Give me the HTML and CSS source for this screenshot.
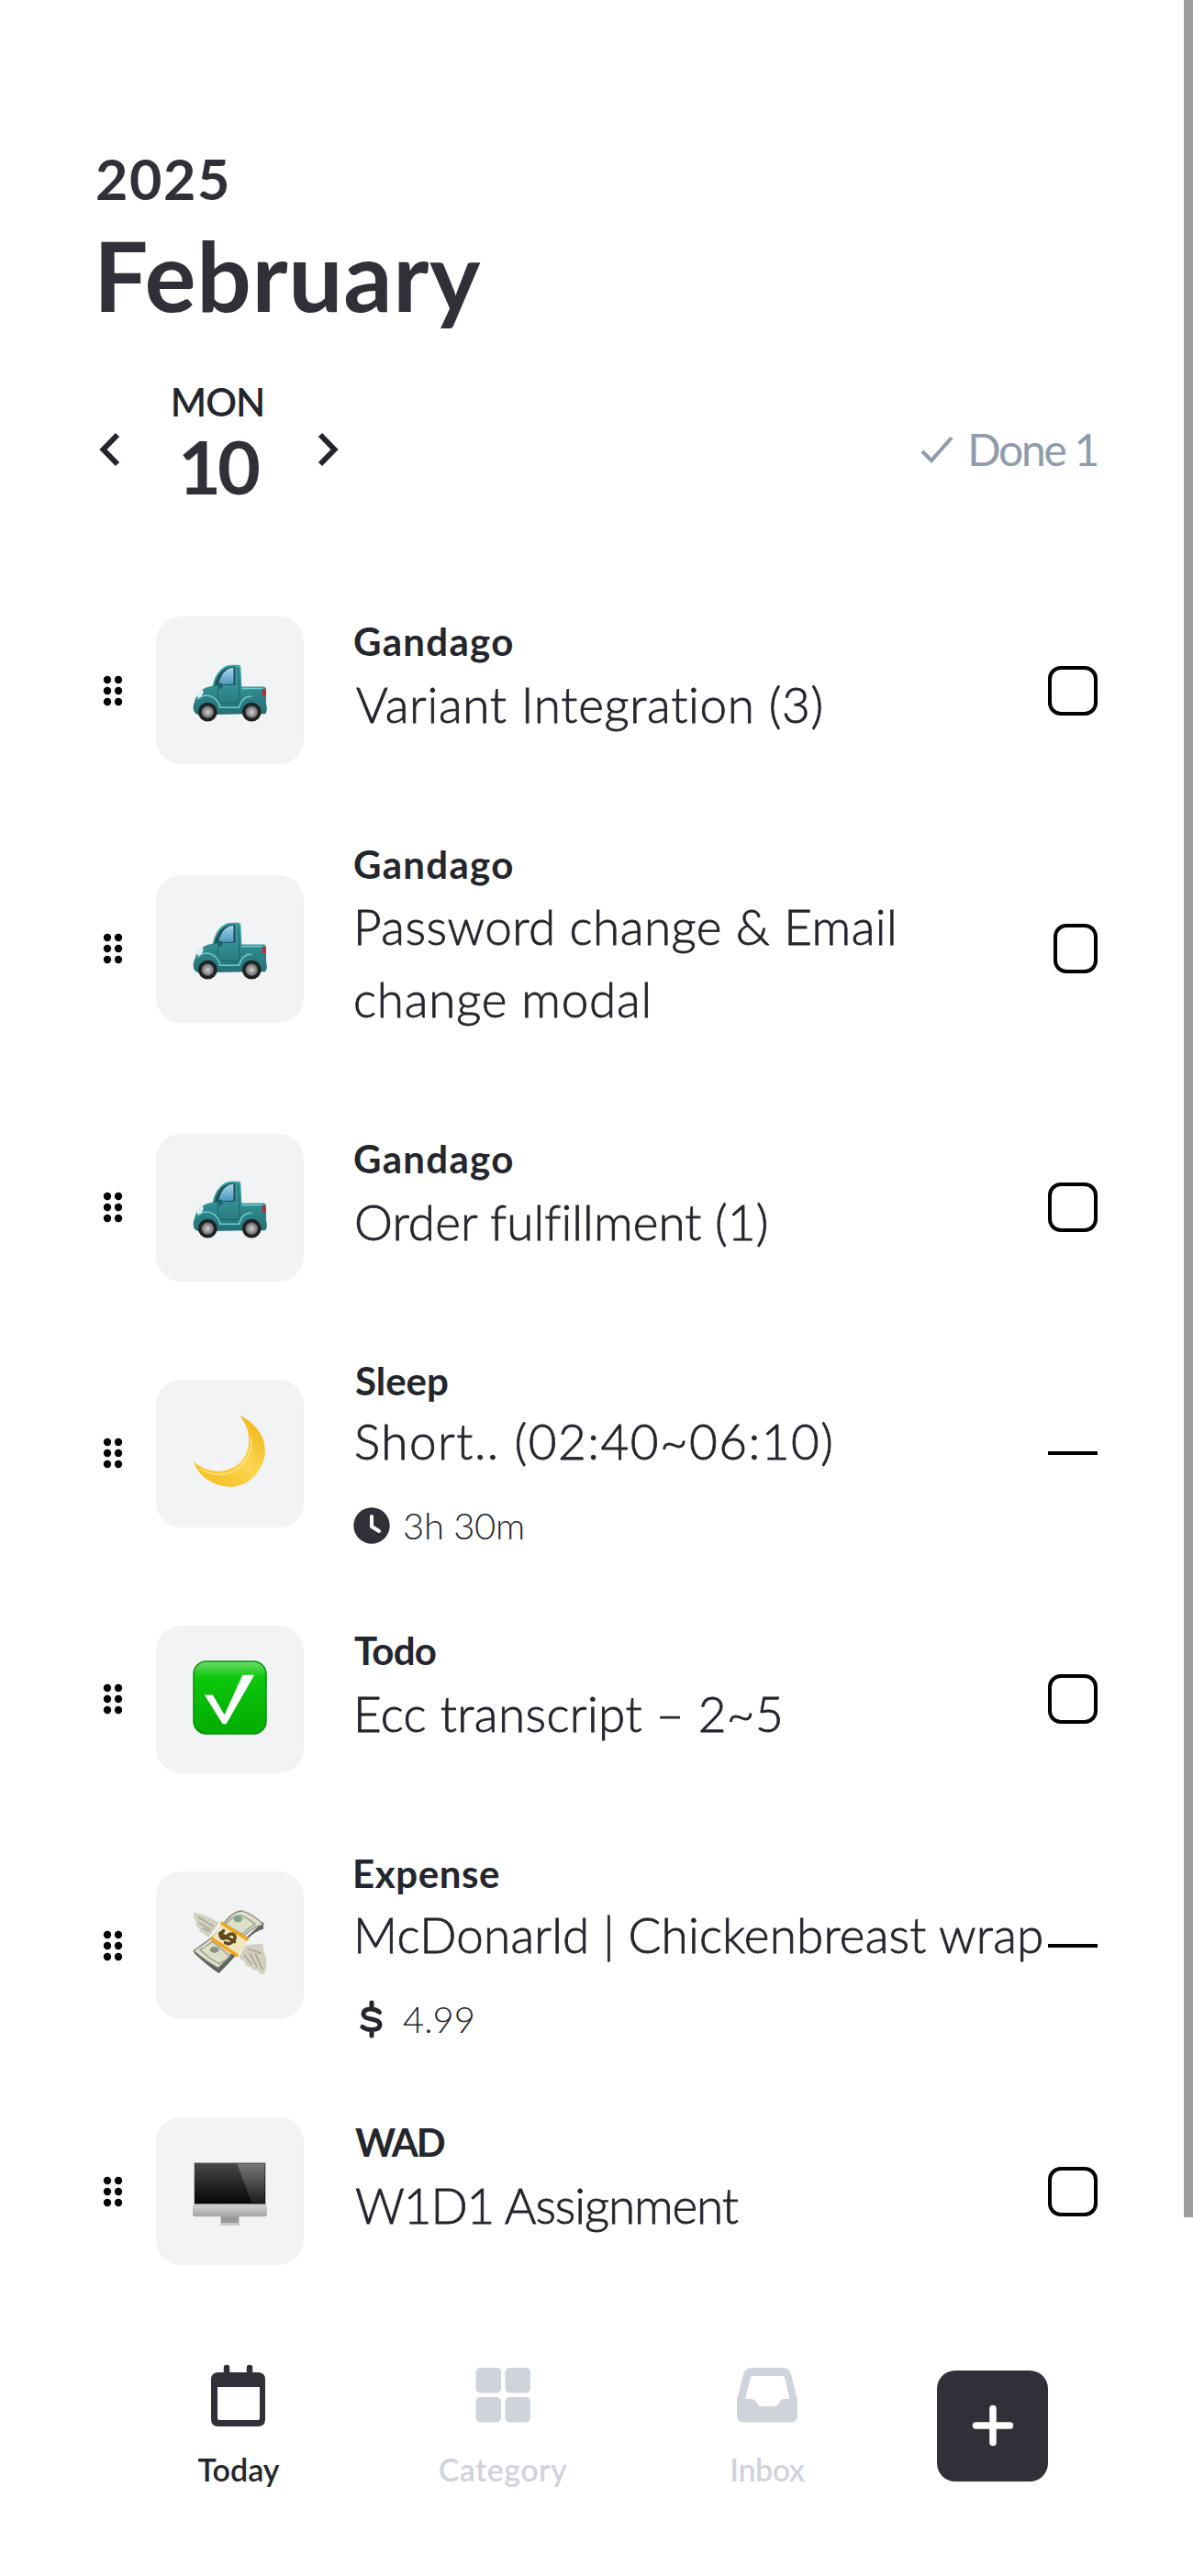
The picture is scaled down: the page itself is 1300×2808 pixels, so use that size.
FILE: index.html
```html
<!DOCTYPE html>
<html lang="en">
<head>
<meta charset="utf-8">
<title>Today</title>
<link rel="stylesheet" href="styles.css">
</head>
<body>
<svg class="defs" width="0" height="0" aria-hidden="true">
  <defs>
    <linearGradient id="teal" x1="0" y1="0" x2="0" y2="1"><stop offset="0" stop-color="#3fa5a8"/><stop offset="1" stop-color="#246f75"/></linearGradient>
    <linearGradient id="glass" x1="0" y1="0" x2="0" y2="1"><stop offset="0" stop-color="#a5d5ea"/><stop offset="1" stop-color="#4a95bd"/></linearGradient>
    <radialGradient id="hub"><stop offset="0" stop-color="#d4d4d4"/><stop offset="1" stop-color="#6a6a6a"/></radialGradient>
    <linearGradient id="gold" x1="1" y1="0" x2="0.2" y2="1"><stop offset="0" stop-color="#f0b00f"/><stop offset=".55" stop-color="#fbd552"/><stop offset="1" stop-color="#f5bd1c"/></linearGradient>
    <linearGradient id="green" x1="0" y1="0" x2="0" y2="1"><stop offset="0" stop-color="#6fdc6f"/><stop offset=".22" stop-color="#0cc70c"/><stop offset="1" stop-color="#00ac00"/></linearGradient>
    <linearGradient id="screen" x1="0" y1="0" x2="0" y2="1"><stop offset="0" stop-color="#484848"/><stop offset="1" stop-color="#050505"/></linearGradient>
    <linearGradient id="shine" x1="0" y1="0" x2="0" y2="1"><stop offset="0" stop-color="#777"/><stop offset="1" stop-color="#1c1c1c"/></linearGradient>
    <linearGradient id="metal" x1="0" y1="0" x2="0" y2="1"><stop offset="0" stop-color="#d0d0d3"/><stop offset="1" stop-color="#a5a5a9"/></linearGradient>
    <symbol id="grip" viewBox="0 0 22 34"><circle cx="5" cy="5" r="4.2"/><circle cx="17" cy="5" r="4.2"/><circle cx="5" cy="17" r="4.2"/><circle cx="17" cy="17" r="4.2"/><circle cx="5" cy="29" r="4.2"/><circle cx="17" cy="29" r="4.2"/></symbol>
    <symbol id="truck" viewBox="0 -6 82 82">
      <path fill="url(#teal)" d="M1 58q-1-5 1-9 2-9 7-13 6-4 13-5 3-15 13-21 3-2 8-2h7q3 0 3 3l1 21h24q3 0 3 4v15q2 8-1 11h-7L9 63q-7 0-8-5Z"/>
      <path fill="#1d5158" d="M24 31Q27 17 36 12q3-2 7-2h4v20Z"/>
      <path fill="url(#glass)" d="M28 30Q31 18 38 13q3-2 7-2v18Z"/>
      <path stroke="#1d6b70" stroke-width="1.2" fill="none" d="M50 11l2 39M28 50h24M29 31q-3 8 0 18"/>
      <path stroke="#6fcdd0" stroke-width="1.6" fill="none" d="M54 34h23M5 46q8-7 16-3t9 12h21q4-13 14-12"/>
      <path fill="#1d6168" d="M28 28q5-1 5 3t-5 3Z"/>
      <ellipse cx="8" cy="39.500" rx="3" ry="5" transform="rotate(30 8 39.500)" fill="#dfeef0"/>
      <rect x="77" y="35" width="3.500" height="7" fill="#c9262e"/>
      <circle cx="16.500" cy="60" r="10.500" fill="#202224"/><circle cx="16.500" cy="60" r="6.700" fill="url(#hub)"/>
      <circle cx="65" cy="60" r="10.500" fill="#202224"/><circle cx="65" cy="60" r="6.700" fill="url(#hub)"/>
    </symbol>
    <symbol id="moon" viewBox="0 0 82 82"><path fill="url(#gold)" d="M52 1C76 12 86 36 76 56 66 79 41 86 20 74 10 69 4 61 1 52 15 64 32 66 47 57 65 45 67 20 52 1Z"/><path fill="none" stroke="#fff0a0" stroke-width="1.500" opacity=".7" d="M8 60q22 12 41 0Q66 48 65 25"/></symbol>
    <symbol id="check" viewBox="0 0 82 82"><rect x="1" y="1" width="80" height="80" rx="14" fill="url(#green)" stroke="#078f0c" stroke-width="1.500"/><path fill="#fff" d="M13 38h9l13 22 20-44h13L37 70h-4Z"/></symbol>
    <symbol id="money" viewBox="0 0 82 82">
      <path fill="#d3cfbf" d="M1 6q12 1 22 8l6 3-11 16q-4-1-5-4-6-1-6-6-5-3-3-7-4-5-3-10Z"/>
      <path fill="#d3cfbf" d="M58 42l20-2q-1 8 2 13 2 6 1 13-1 8-4 8-4-1-6-5-4 2-7-3-5 0-7-6l-6-4Z"/>
      <path stroke="#a19d8e" stroke-width="1.300" fill="none" d="M6 11l17 10M7 17l13 8M11 23l8 4M61 46l15 5M57 53l8 10M63 51l8 15M69 51l8 18"/>
      <path fill="#5f645c" d="M2 51q15 14 27 22 8-8 17-18 14-26 32-31v-8L52 40 29 65 1 48Z"/>
      <path fill="#dedfc9" stroke="#777b70" stroke-width="1.200" d="M1 48 22 33 35 17Q44 5 54 4q12 3 24 15-17 4-27 20-10 17-23 28Q15 60 1 48Z"/>
      <path fill="none" stroke="#969b8b" stroke-width="1.300" d="M8 47l14-9 19 16q-6 7-13 8-10-6-20-15ZM36 19q8-10 17-10 8 3 16 10-8 4-14 11Z"/>
      <ellipse cx="50" cy="13" rx="5" ry="3.500" fill="#7ba78d"/><ellipse cx="24" cy="47" rx="5" ry="3.500" fill="#8c9182"/>
      <path fill="#f0e7bd" d="M21 35 32 18l29 18-11 17Z"/>
      <path stroke="#f0a51c" stroke-width="3.600" d="M20 34l30 20M31 17l30 19"/>
      <path fill="none" stroke="#60491e" stroke-width="3.600" d="M34 26q-6 4-2 8 3 2 6-2t7-2q4 3-1 8-4 4-8 1M30 29l16 9" stroke-linecap="round"/>
    </symbol>
    <symbol id="desktop" viewBox="0 0 82 82"><path fill="#98989b" d="M31 60h20v20H31Z"/><path fill="#c9c9cb" d="M31 77h20v3H31Z"/><rect x="1" y="10" width="80" height="53" fill="#c4c4c7"/><rect x="2" y="11" width="78" height="45" fill="url(#screen)"/><path fill="url(#shine)" d="M49 12h30v43H65Z"/><path fill="url(#metal)" d="M0 58h82v9q0 3-3 3H3q-3 0-3-3Z"/></symbol>
  </defs>
</svg>
<div class="scrollbar"></div>
<header class="header">
  <div class="year">2025</div>
  <h1 class="month">February</h1>
  <div class="day-row">
    <svg class="chevron" viewBox="0 0 24 38"><path d="M21 3 5.500 19 21 35"/></svg>
    <div class="date"><span class="weekday">MON</span><span class="day">10</span></div>
    <svg class="chevron" viewBox="0 0 24 38"><path d="M3 3l15.500 16L3 35"/></svg>
    <div class="done"><svg class="tick" viewBox="0 0 36 30"><path d="M2 17l10 10L34 2"/></svg><span class="done-label">Done 1</span></div>
  </div>
</header>
<ul class="list">
  <li class="item variant"><svg class="grip"><use href="#grip"/></svg><div class="tile"><svg class="emoji"><use href="#truck"/></svg></div>
    <div class="text"><div class="title gandago">Gandago</div><div class="name">Variant Integration (3)</div></div><span class="box"></span></li>
  <li class="item password"><svg class="grip"><use href="#grip"/></svg><div class="tile"><svg class="emoji"><use href="#truck"/></svg></div>
    <div class="text"><div class="title gandago">Gandago</div><div class="name">Password change &amp; Email</div><div class="name second">change modal</div></div><span class="box narrow"></span></li>
  <li class="item order"><svg class="grip"><use href="#grip"/></svg><div class="tile"><svg class="emoji"><use href="#truck"/></svg></div>
    <div class="text"><div class="title gandago">Gandago</div><div class="name">Order fulfillment (1)</div></div><span class="box"></span></li>
  <li class="item sleep"><svg class="grip"><use href="#grip"/></svg><div class="tile"><svg class="emoji"><use href="#moon"/></svg></div>
    <div class="text with-meta"><div class="title">Sleep</div><div class="name">Short.. (02:40~06:10)</div>
      <div class="meta"><svg class="meta-icon" viewBox="0 0 40 40"><circle cx="20" cy="20" r="19.700" fill="#303138"/><path d="M20 10v11l8 5" fill="none" stroke="#fff" stroke-width="4" stroke-linecap="round" stroke-linejoin="round"/></svg><span>3h 30m</span></div></div><span class="dash"></span></li>
  <li class="item todo"><svg class="grip"><use href="#grip"/></svg><div class="tile"><svg class="emoji"><use href="#check"/></svg></div>
    <div class="text"><div class="title">Todo</div><div class="name">Ecc transcript – 2~5</div></div><span class="box"></span></li>
  <li class="item expense"><svg class="grip"><use href="#grip"/></svg><div class="tile"><svg class="emoji"><use href="#money"/></svg></div>
    <div class="text with-meta"><div class="title">Expense</div><div class="name">McDonarld | Chickenbreast wrap</div>
      <div class="meta"><svg class="meta-icon" viewBox="0 0 40 40"><path d="M20 2v6m0 24v6M28.500 12.500Q24 8.500 18 9q-7 .5-7 5.500 0 4 9 5.500t9 6q0 5-8 5.500-6 .5-11-3" fill="none" stroke="#24262d" stroke-width="5" stroke-linecap="round"/></svg><span>4.99</span></div></div><span class="dash"></span></li>
  <li class="item wad"><svg class="grip"><use href="#grip"/></svg><div class="tile"><svg class="emoji"><use href="#desktop"/></svg></div>
    <div class="text"><div class="title">WAD</div><div class="name">W1D1 Assignment</div></div><span class="box"></span></li>
</ul>
<nav class="nav">
  <a class="tab today"><svg class="tab-icon" viewBox="0 0 72 72"><path fill="#303138" fill-rule="evenodd" d="M14 13h43q8 0 8 8v43q0 8-8 8H14q-8 0-8-8V21q0-8 8-8Zm-1 16v34q0 2 2 2h42q2 0 2-2V29Z"/><path d="M23 8v8m25-8v8" stroke="#303138" stroke-width="6.500" stroke-linecap="round"/></svg><span>Today</span></a>
  <a class="tab category"><svg class="tab-icon" viewBox="0 0 72 72"><g fill="#cfd3dc"><rect x="6.500" y="8" width="27.500" height="27.500" rx="5"/><rect x="38.500" y="8" width="27.500" height="27.500" rx="5"/><rect x="6.500" y="40" width="27.500" height="27.500" rx="5"/><rect x="38.500" y="40" width="27.500" height="27.500" rx="5"/></g></svg><span>Category</span></a>
  <a class="tab inbox"><svg class="tab-icon" viewBox="0 0 72 72"><path fill="#cfd3dc" fill-rule="evenodd" d="M19 8h34q7 0 9 7l6.500 26q.5 2 .5 4v15q0 7.500-8 7.500H11q-8 0-8-7.500V45q0-2 .5-4L10 15q2-7 9-7Zm1 9q-1.500 0-2 1.500L12 42h7q3 0 4.500 2.500L26 48q1 2 3 2h16q2 0 3-2l2-3.500Q51.500 42 54 42h6.500L55 18.500Q54.500 17 53 17Z"/></svg><span>Inbox</span></a>
  <button class="add" aria-label="Add"><svg class="plus" viewBox="0 0 46 46"><path d="M23 4.500v37M4.500 23h37"/></svg></button>
</nav>
</body>
</html>
```
FILE: styles.css
```css
* { box-sizing: border-box; }
body { margin: 0; width: 1300px; height: 2808px; overflow: hidden; background: #fff; color: #24262d; font-family: Lato, "Open Sans", sans-serif; display: flex; flex-direction: column; }
svg { display: block; overflow: visible; flex: none; }
.defs { position: absolute; }
.scrollbar { position: absolute; top: 0; right: 0; width: 10px; height: 2417px; background: #9d9d9d; }

.header { padding: 160px 104px 0; color: #303138; height: 618.5px; }
.year { font-size: 61px; line-height: 70px; font-weight: 700; letter-spacing: 1.6px; }
.month { margin: 9px 0 0; font-size: 105px; line-height: 120px; font-weight: 700; letter-spacing: .7px; text-indent: -2px; }
.day-row { display: flex; align-items: center; height: 156px; margin-top: 53px; }
.chevron { width: 24px; height: 38px; margin-left: 3px; }
.chevron path { fill: none; stroke: #24262d; stroke-width: 6; }
.date { width: 212px; height: 156px; display: flex; flex-direction: column; align-items: center; gap: 6px; }
.weekday { font-size: 42px; line-height: 50px; font-weight: 600; letter-spacing: -1px; color: #24262d; padding-top: 1px; }
.day { font-size: 81px; line-height: 80px; font-weight: 700; letter-spacing: -4px; margin-top: -1px; }
.done { margin-left: auto; display: flex; align-items: center; gap: 15px; color: #909bab; }
.tick { width: 36px; height: 30px; }
.tick path { fill: none; stroke: #909bab; stroke-width: 4; }
.done-label { font-size: 48px; line-height: 58px; letter-spacing: -2.3px; }

.list { list-style: none; margin: 0; padding: 0; }
.item { display: flex; align-items: center; min-height: 268.1px; padding: 25px 104px 25px 112px; }
.grip { width: 22px; height: 34px; margin-right: 36px; }
.tile { flex: none; width: 161px; height: 161px; border-radius: 27px; background: #f2f3f5; display: flex; align-items: center; justify-content: center; margin-right: 54px; }
.emoji { width: 81px; height: 81px; margin-bottom: 3px; }
.text { flex: 1; min-width: 0; white-space: nowrap; padding: 2px 0 29px; }
.with-meta { padding-bottom: 0; height: 218px; }
.title { font-size: 42px; line-height: 56.6px; font-weight: 700; }
.name { font-size: 53px; line-height: 79px; font-weight: 300; -webkit-text-stroke: .8px #24262d; }
.with-meta .name { margin-top: -1px; }
.sleep .name { margin-top: -3px; }
.meta { display: flex; align-items: center; gap: 14px; height: 50px; margin-top: 28px; font-size: 40px; font-weight: 300; }
.meta-icon { width: 40px; height: 40px; }
.box { flex: none; width: 54px; height: 54px; border: 4px solid #000; border-radius: 14px; }
.narrow { width: 48px; }
.dash { flex: none; width: 54px; height: 4px; background: #000; }

.gandago { letter-spacing: 1.3px; text-indent: 0; }
.variant .name { letter-spacing: .7px; text-indent: 3px; }
.password .name { letter-spacing: .5px; text-indent: 0; }
.password .second { letter-spacing: .8px; text-indent: 0; }
.order .name { letter-spacing: .1px; text-indent: 1px; }
.sleep .title { text-indent: 2px; }
.sleep .name { letter-spacing: 1.5px; text-indent: 1px; }
.sleep .meta { letter-spacing: -.3px; }
.todo .title { letter-spacing: -.8px; text-indent: 1px; }
.todo .name { letter-spacing: .4px; text-indent: 0; }
.expense .title { letter-spacing: .6px; text-indent: -1px; }
.expense .name { letter-spacing: .2px; text-indent: 0; }
.wad .title { letter-spacing: -2.3px; text-indent: 2px; }
.wad .name { letter-spacing: -1.1px; text-indent: 2px; }

.nav { display: flex; align-items: flex-start; padding: 50px 0 0 116px; }
.tab { width: 288px; display: flex; flex-direction: column; align-items: center; gap: 27px; font-size: 34px; line-height: 40px; font-weight: 600; color: #cfd3dc; }
.tab-icon { width: 72px; height: 72px; }
.today { color: #24262d; }
.category { letter-spacing: .4px; }
.inbox { letter-spacing: -.5px; }
.add { margin: 11px 0 0 41px; width: 121px; height: 121px; padding: 0; border: 0; border-radius: 20px; background: #303138; display: flex; align-items: center; justify-content: center; }
.plus { width: 46px; height: 46px; }
.plus path { fill: none; stroke: #fff; stroke-width: 7.5; stroke-linecap: round; }
```
